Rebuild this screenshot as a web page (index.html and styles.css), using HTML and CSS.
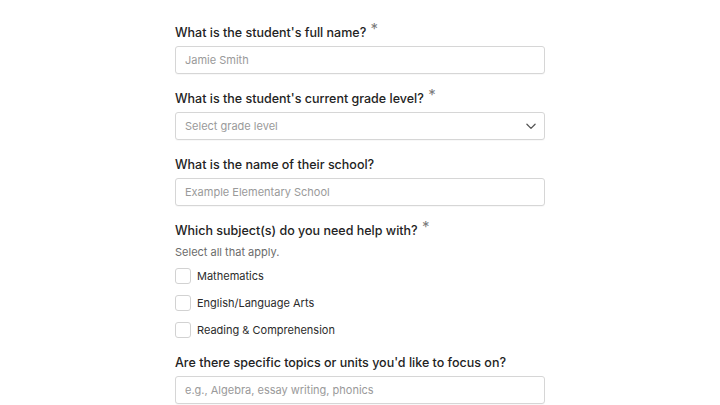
FILE: index.html
```html
<!DOCTYPE html>
<html lang="en">
<head>
    <meta charset="UTF-8">
    <meta name="viewport" content="width=device-width, initial-scale=1.0">
    <title>Tutoring Request</title>
    <link rel="stylesheet" href="styles.css">
</head>
<body>
    <form class="form" id="tutor-form">
        <div class="form-group">
            <label for="student-name">What is the student's full name? <span class="required">*</span></label>
            <input type="text" id="student-name" placeholder="Jamie Smith">
        </div>

        <div class="form-group">
            <label for="grade-level">What is the student's current grade level? <span class="required">*</span></label>
            <div class="select-wrap">
                <select id="grade-level">
                    <option value="" disabled selected>Select grade level</option>
                    <option value="k">Kindergarten</option>
                    <option value="1">1st Grade</option>
                    <option value="2">2nd Grade</option>
                </select>
                <svg class="chevron" width="14" height="14" viewBox="0 0 24 24" fill="none" stroke="currentColor" stroke-width="2.2" stroke-linecap="round" stroke-linejoin="round">
                    <polyline points="5 9 12 16 19 9"></polyline>
                </svg>
            </div>
        </div>

        <div class="form-group">
            <label for="school-name">What is the name of their school?</label>
            <input type="text" id="school-name" placeholder="Example Elementary School">
        </div>

        <div class="form-group">
            <label>Which subject(s) do you need help with? <span class="required">*</span></label>
            <div class="hint">Select all that apply.</div>
            <div class="checkbox-list">
                <label class="checkbox-row"><input type="checkbox"> <span>Mathematics</span></label>
                <label class="checkbox-row"><input type="checkbox"> <span>English/Language Arts</span></label>
                <label class="checkbox-row"><input type="checkbox"> <span>Reading &amp; Comprehension</span></label>
            </div>
        </div>

        <div class="form-group">
            <label for="topics">Are there specific topics or units you'd like to focus on?</label>
            <input type="text" id="topics" placeholder="e.g., Algebra, essay writing, phonics">
        </div>
    </form>
</body>
</html>
```

FILE: styles.css
```css
* {
    margin: 0;
    padding: 0;
    box-sizing: border-box;
    font-family: 'Inter', 'Liberation Sans', sans-serif;
}

body {
    background-color: #ffffff;
    color: #1f1f1f;
}

.form {
    width: 370px;
    margin: 0 auto;
    padding-top: 24px;
}

.form-group {
    margin-bottom: 16px;
}

.form-group > label {
    display: block;
    font-size: 12.5px;
    line-height: 18px;
    font-weight: 500;
    color: #232323;
    margin-bottom: 4px;
}

.required {
    color: #7c7c7c;
    font-size: 15px;
    font-weight: 400;
    line-height: 0;
    position: relative;
    top: -3px;
    margin-left: 1px;
}

input[type="text"], select {
    display: block;
    width: 100%;
    height: 28px;
    padding: 0 9px;
    border: 1px solid #d6d6d6;
    border-radius: 3px;
    font-size: 11px;
    color: #333;
    background-color: #fff;
    outline: none;
    box-shadow: 0 1px 1px rgba(0, 0, 0, 0.03);
}

input::placeholder {
    color: #9a9a9a;
}

.select-wrap {
    position: relative;
}

select {
    appearance: none;
    -webkit-appearance: none;
    color: #9a9a9a;
}

.chevron {
    position: absolute;
    right: 7px;
    top: 7px;
    color: #555;
    pointer-events: none;
}

.hint {
    font-size: 11px;
    line-height: 16px;
    color: #6b6b6b;
    margin-top: 4px;
}

.checkbox-list {
    display: flex;
    flex-direction: column;
    gap: 11px;
    margin-top: 8px;
    margin-bottom: 1px;
}

.checkbox-row {
    display: flex;
    align-items: center;
    gap: 6px;
    font-size: 11px;
    color: #2b2b2b;
    height: 16px;
}

.checkbox-row input {
    appearance: none;
    -webkit-appearance: none;
    width: 16px;
    height: 16px;
    border: 1px solid #d2d2d2;
    border-radius: 3px;
    background-color: #fff;
    margin: 0;
}
```
